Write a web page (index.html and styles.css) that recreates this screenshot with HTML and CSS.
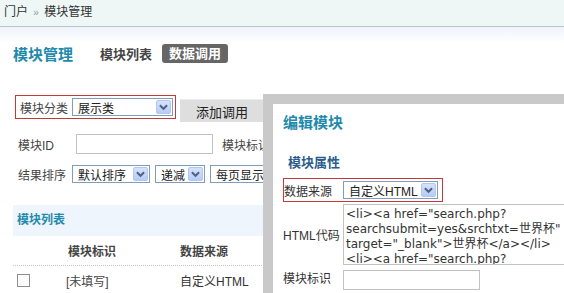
FILE: index.html
```html
<!DOCTYPE html>
<html lang="zh-CN">
<head>
    <meta charset="UTF-8">
    <title>模块管理</title>
    <link rel="stylesheet" href="styles.css">
</head>
<body>

    <div class="crumb">门户 <span class="sep">»</span> 模块管理</div>

    <div class="main">
        <div class="head">
            <h1>模块管理</h1>
            <a class="tab">模块列表</a>
            <a class="tab on">数据调用</a>
        </div>

        <!-- filter form -->
        <div class="row row1">
            <div class="mark">
                <label class="lbl">模块分类</label>
                <div class="sel w100"><span>展示类</span><i class="arr"><svg viewBox="0 0 10 10"><path d="M2 3.5 L5 6.5 L8 3.5" /></svg></i></div>
            </div>
            <button class="btn">添加调用</button>
        </div>

        <div class="row row2">
            <label class="lbl">模块ID</label>
            <input class="txt w137" type="text">
            <label class="lbl2">模块标识</label>
        </div>

        <div class="row row3">
            <label class="lbl">结果排序</label>
            <div class="sel w78"><span>默认排序</span><i class="arr"><svg viewBox="0 0 10 10"><path d="M2 3.5 L5 6.5 L8 3.5" /></svg></i></div>
            <div class="sel w50"><span>递减</span><i class="arr"><svg viewBox="0 0 10 10"><path d="M2 3.5 L5 6.5 L8 3.5" /></svg></i></div>
            <div class="sel w100"><span>每页显示</span></div>
        </div>

        <!-- module list -->
        <div class="band">模块列表</div>
        <div class="trow thead">
            <span class="c1"></span>
            <span class="c2">模块标识</span>
            <span class="c3">数据来源</span>
        </div>
        <div class="trow">
            <span class="c1"><i class="chk"></i></span>
            <span class="c2">[未填写]</span>
            <span class="c3">自定义HTML</span>
        </div>
    </div>

    <!-- edit dialog -->
    <div class="dialog">
        <h2>编辑模块</h2>
        <h3>模块属性</h3>
        <div class="mark dmark">
            <label class="dl">数据来源</label>
            <div class="sel w95"><span>自定义HTML</span><i class="arr"><svg viewBox="0 0 10 10"><path d="M2 3.5 L5 6.5 L8 3.5" /></svg></i></div>
        </div>
        <div class="drow code">
            <label class="dl">HTML代码</label>
            <textarea class="area" wrap="off">&lt;li&gt;&lt;a href="search.php?
searchsubmit=yes&amp;srchtxt=世界杯"
target="_blank"&gt;世界杯&lt;/a&gt;&lt;/li&gt;
&lt;li&gt;&lt;a href="search.php?</textarea>
        </div>
        <div class="drow">
            <label class="dl">模块标识</label>
            <input class="txt w137" type="text">
        </div>
    </div>

</body>
</html>
```

FILE: styles.css
```css
* {
    box-sizing: border-box;
    margin: 0;
    padding: 0;
}

html {
    overflow: hidden;
}

body {
    font-family: "Liberation Sans", "Noto Sans CJK SC", sans-serif;
    font-size: 12px;
    color: #333;
    background: #fff;
    width: 564px;
    height: 293px;
    overflow: hidden;
    position: relative;
}

.crumb {
    height: 27px;
    line-height: 25px;
    padding-left: 4px;
    background: #eef6f6;
    border-bottom: 1px solid #b4c8c6;
    color: #333;
}

.crumb .sep {
    color: #999;
    font-size: 10px;
    margin: 0 2px;
}

.main {
    height: 266px;
    overflow: hidden;
    background: linear-gradient(to bottom, #eef3fb, #fff 16px);
    padding-top: 17px;
}

.head {
    display: flex;
    align-items: center;
    height: 19px;
    padding-left: 13px;
}

.head h1 {
    font-size: 15px;
    color: #1f8aab;
    margin-right: 27px;
}

.tab {
    font-size: 13px;
    font-weight: bold;
    color: #444;
    margin-right: 10px;
}

.tab.on {
    background: #666;
    color: #fff;
    border-radius: 3px;
    padding: 0 7px;
    height: 19px;
    line-height: 19px;
}

.row {
    display: flex;
    align-items: center;
    padding-left: 15px;
}

.row1 {
    margin-top: 32px;
    height: 26px;
}

.row2 {
    margin-top: 13px;
    height: 20px;
}

.row3 {
    margin-top: 11px;
    height: 18px;
}

.mark {
    display: flex;
    align-items: center;
    border: 1px solid #c0393b;
    height: 24px;
    padding: 0 2px;
    align-self: flex-start;
}

.lbl {
    width: 57px;
    padding-left: 3px;
    color: #444;
}

.row .mark .lbl {
    width: 54px;
    padding-left: 2px;
}

.lbl2 {
    margin-left: 9px;
    color: #444;
}

.sel {
    display: flex;
    align-items: center;
    justify-content: space-between;
    height: 18px;
    border: 1px solid #7f9db9;
    background: #fff;
    padding: 0 1px 0 5px;
    margin-right: 5px;
    color: #222;
    white-space: nowrap;
    overflow: hidden;
}

.mark .sel {
    margin-right: 0;
}

.w100 { width: 101px; }
.w78 { width: 78px; }
.w50 { width: 50px; }
.w95 { width: 95px; }
.w137 { width: 137px; }

.arr {
    display: block;
    width: 15px;
    height: 14px;
    flex: none;
    background: linear-gradient(to bottom, #d6e2fc, #b6cbf6);
    border: 1px solid #b3c6ef;
    border-radius: 2px;
}

.arr svg {
    display: block;
    width: 13px;
    height: 12px;
}

.arr path {
    fill: none;
    stroke: #4d6185;
    stroke-width: 1.6;
}

.btn {
    margin-left: 4px;
    margin-top: 5px;
    width: 84px;
    height: 23px;
    border: none;
    background: #dedede;
    border-top: 1px solid #ececec;
    font: inherit;
    font-size: 13px;
    color: #222;
}

.txt {
    height: 20px;
    border: 1px solid #c2c2c2;
    background: #fff;
}

.row2 .txt {
    margin-left: 4px;
}

.band {
    margin: 22px 0 0 13px;
    height: 31px;
    line-height: 31px;
    padding-left: 4px;
    background: #eef5fc;
    color: #1f8aab;
    font-weight: bold;
}

.trow {
    display: flex;
    align-items: center;
    margin-left: 13px;
    height: 29px;
}

.thead {
    height: 30px;
    border-bottom: 1px dotted #c8c8c8;
    font-weight: bold;
    color: #444;
}

.c1 {
    width: 53px;
    padding-left: 4px;
}

.c2 {
    width: 114px;
    color: #444;
}

.thead .c2 {
    padding-left: 2px;
}

.chk {
    display: block;
    width: 13px;
    height: 13px;
    border: 1px solid #8e8f8f;
    background: #fbfbfb;
}

/* dialog over the page */
.dialog {
    position: absolute;
    left: 263px;
    top: 94px;
    width: 301px;
    height: 199px;
    overflow: hidden;
    border-left: 10px solid #c9c9c9;
    border-top: 10px solid #c9c9c9;
    background: #fff;
    padding-left: 10px;
}

.dialog h2 {
    font-size: 15px;
    color: #1f8aab;
    margin-top: 9px;
    height: 20px;
    line-height: 20px;
}

.dialog h3 {
    font-size: 13px;
    color: #2b5d8c;
    margin: 21px 0 0 5px;
    height: 18px;
    line-height: 18px;
}

.dmark {
    margin-top: 6px;
    width: 160px;
    padding-left: 0;
}

.dl {
    width: 60px;
    flex: none;
    color: #333;
}

.dmark .dl {
    width: 59px;
}

.drow {
    display: flex;
    align-items: center;
    margin-top: 2px;
}

.drow.code {
    height: 61px;
}

.drow + .drow {
    margin-top: 5px;
    align-items: flex-start;
}

.drow + .drow .dl {
    line-height: 18px;
}

.area {
    flex: none;
    width: 260px;
    height: 61px;
    border: 1px solid #c2c2c2;
    font-family: "DejaVu Sans", "Noto Sans CJK SC", sans-serif;
    font-size: 12px;
    line-height: 15px;
    padding: 2px 0 0 2px;
    color: #333;
    resize: none;
    overflow: hidden;
}
```
